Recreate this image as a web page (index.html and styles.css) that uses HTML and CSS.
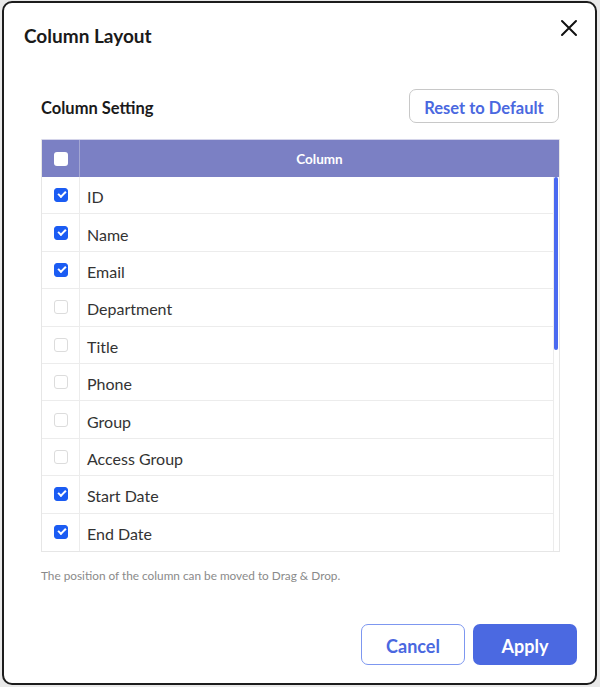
FILE: index.html
```html
<!DOCTYPE html>
<html>
<head>
<meta charset="utf-8">
<link rel="stylesheet" href="styles.css">
</head>
<body>
<div class="modal">
  <div class="modal-head">
    <h1 class="title">Column Layout</h1>
    <button class="close" aria-label="Close">
      <svg width="18" height="18" viewBox="0 0 18 18"><path d="M2 2L16 16M16 2L2 16" stroke="#111" stroke-width="2" stroke-linecap="round"/></svg>
    </button>
  </div>
  <div class="modal-body">
    <div class="section-head">
      <h2 class="subtitle">Column Setting</h2>
      <button class="btn-reset">Reset to Default</button>
    </div>
    <div class="grid">
      <div class="grid-header">
        <div class="cell-check"><span class="cb cb-head"></span></div>
        <div class="cell-title">Column</div>
      </div>
      <div class="grid-body">
        <div class="rows">
          <div class="row"><div class="cell-check"><span class="cb on"></span></div><div class="cell-name">ID</div></div>
          <div class="row"><div class="cell-check"><span class="cb on"></span></div><div class="cell-name">Name</div></div>
          <div class="row"><div class="cell-check"><span class="cb on"></span></div><div class="cell-name">Email</div></div>
          <div class="row"><div class="cell-check"><span class="cb"></span></div><div class="cell-name">Department</div></div>
          <div class="row"><div class="cell-check"><span class="cb"></span></div><div class="cell-name">Title</div></div>
          <div class="row"><div class="cell-check"><span class="cb"></span></div><div class="cell-name">Phone</div></div>
          <div class="row"><div class="cell-check"><span class="cb"></span></div><div class="cell-name">Group</div></div>
          <div class="row"><div class="cell-check"><span class="cb"></span></div><div class="cell-name">Access Group</div></div>
          <div class="row"><div class="cell-check"><span class="cb on"></span></div><div class="cell-name">Start Date</div></div>
          <div class="row"><div class="cell-check"><span class="cb on"></span></div><div class="cell-name">End Date</div></div>
        </div>
        <div class="track"><div class="thumb"></div></div>
      </div>
    </div>
    <p class="note">The position of the column can be moved to Drag &amp; Drop.</p>
  </div>
  <div class="modal-foot">
    <button class="btn btn-cancel">Cancel</button>
    <button class="btn btn-apply">Apply</button>
  </div>
</div>
</body>
</html>
```

FILE: styles.css
```css
* { box-sizing: border-box; }
html, body { margin: 0; padding: 0; }
body {
  background: #e9e9e9;
  font-family: "Lato", "Noto Sans", sans-serif;
  width: 600px;
  height: 687px;
  padding: 1px 3px 2px 2px;
}
.modal {
  width: 595px;
  height: 684px;
  background: #fff;
  border: 2px solid #1c1c1c;
  border-radius: 10px;
  display: flex;
  flex-direction: column;
}
.modal-head {
  display: flex;
  justify-content: space-between;
  align-items: flex-start;
  padding: 20px 16px 0 20px;
  height: 54px;
}
.title {
  margin: 0;
  font-size: 19px;
  line-height: 26px;
  font-weight: 700;
  color: #1a1a1a;
}
.close {
  border: 0;
  background: none;
  padding: 0;
  margin-top: -4px;
  margin-right: 1px;
  width: 18px;
  height: 18px;
  cursor: pointer;
}
.modal-body {
  padding: 32px 36px 0 37px;
  flex: 1;
}
.section-head {
  display: flex;
  justify-content: space-between;
  align-items: center;
  margin-bottom: 16px;
}
.subtitle {
  margin: 0;
  font-size: 16.5px;
  font-weight: 700;
  color: #1a1a1a;
  padding-top: 3px;
}
.btn-reset {
  height: 34px;
  width: 150px;
  border: 1px solid #c8c8c8;
  border-radius: 7px;
  background: #fff;
  color: #4a68e0;
  font-family: inherit;
  font-size: 16.5px;
  font-weight: 700;
  padding: 3px 0 0;
}
.grid {
  border: 1px solid #e6e6e6;
  border-top: 0;
  width: 519px;
}
.grid-header {
  display: flex;
  height: 38px;
  background: #7b80c4;
  border-top: 1px solid #d4d4ea;
}
.grid-header .cell-check {
  border-right: 1px solid #a3a6d3;
}
.cell-check {
  width: 38px;
  flex: none;
  display: flex;
  align-items: center;
  justify-content: center;
  border-right: 1px solid #ececec;
}
.cell-title {
  flex: 1;
  display: flex;
  align-items: center;
  justify-content: center;
  color: #fff;
  font-size: 13.5px;
  font-weight: 700;
  padding-top: 1px;
}
.grid-body {
  display: flex;
}
.rows {
  flex: 1;
  border-right: 1px solid #ececec;
}
.row {
  display: flex;
  height: 37.4px;
  border-bottom: 1px solid #ececec;
}
.row:last-child { border-bottom: 0; }
.cell-name {
  flex: 1;
  display: flex;
  align-items: center;
  padding: 3px 0 0 7px;
  font-size: 16px;
  color: #333;
}
.cb {
  width: 14px;
  height: 14px;
  border-radius: 3px;
  border: 1px solid #dcdcdc;
  background: #fff;
  display: block;
  position: relative;
}
.cb-head {
  border: 0;
  border-radius: 3px;
}
.cb.on {
  background: #1b5cf3;
  border-color: #1b5cf3;
}
.cb.on::after {
  content: "";
  position: absolute;
  left: 3px;
  top: 2px;
  width: 6px;
  height: 3px;
  border-left: 2px solid #fff;
  border-bottom: 2px solid #fff;
  transform: rotate(-45deg);
}
.track {
  width: 5px;
  flex: none;
}
.thumb {
  width: 4px;
  height: 173px;
  background: #4a6af0;
  border-radius: 2px;
}
.note {
  margin: 16px 0 0;
  font-size: 11.8px;
  color: #8a8a8a;
}
.modal-foot {
  display: flex;
  justify-content: flex-end;
  gap: 8px;
  padding: 0 18px 18px 0;
}
.btn {
  width: 104px;
  height: 41px;
  border-radius: 7px;
  font-family: inherit;
  font-size: 18px;
  font-weight: 700;
  padding: 2px 0 0;
}
.btn-cancel {
  background: #fff;
  border: 1.5px solid #7d97f0;
  color: #4a68e0;
}
.btn-apply {
  background: #4b69e1;
  border: 0;
  color: #fff;
}
```
